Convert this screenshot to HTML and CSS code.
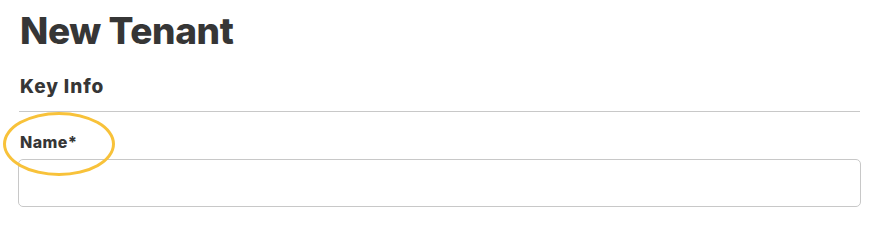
FILE: index.html
```html
<!DOCTYPE html>
<html>
<head>
<meta charset="utf-8">
<link rel="stylesheet" href="styles.css">
</head>
<body>
<div class="page">
  <h1 class="title">New Tenant</h1>
  <h2 class="section">Key Info</h2>
  <div class="field">
    <label class="label">Name*</label>
    <span class="highlight"></span>
    <input class="input" type="text">
  </div>
</div>
</body>
</html>
```
FILE: styles.css
```css
html, body { margin: 0; padding: 0; background: #fff; }
body { font-family: Inter, "Noto Sans", sans-serif; color: #363636; }
.page { padding: 8px 18px 0 19px; }
.title {
  margin: 0;
  padding-left: 1px;
  font-size: 37px;
  font-weight: 800;
  line-height: 46px;
  letter-spacing: -0.4px;
  color: #363636;
}
.section {
  margin: 21px 0 0;
  padding: 0 0 12px 1px;
  font-size: 19px;
  font-weight: 800;
  line-height: 24px;
  letter-spacing: 0.9px;
  color: #363636;
  border-bottom: 1px solid #c8c8c8;
}
.field { position: relative; padding-top: 20px; }
.label {
  display: block;
  padding-left: 1px;
  font-size: 16px;
  font-weight: 800;
  line-height: 20px;
  letter-spacing: 0.4px;
  color: #363636;
}
.highlight {
  position: absolute;
  left: -16px;
  top: 0;
  box-sizing: border-box;
  width: 112px;
  height: 64px;
  border: 3px solid #f8c23a;
  border-radius: 50%;
}
.input {
  display: block;
  box-sizing: border-box;
  margin-top: 7px;
  width: 843px;
  margin-left: -1px;
  height: 48px;
  border: 1px solid #c8c8c8;
  border-radius: 5px;
}
```
